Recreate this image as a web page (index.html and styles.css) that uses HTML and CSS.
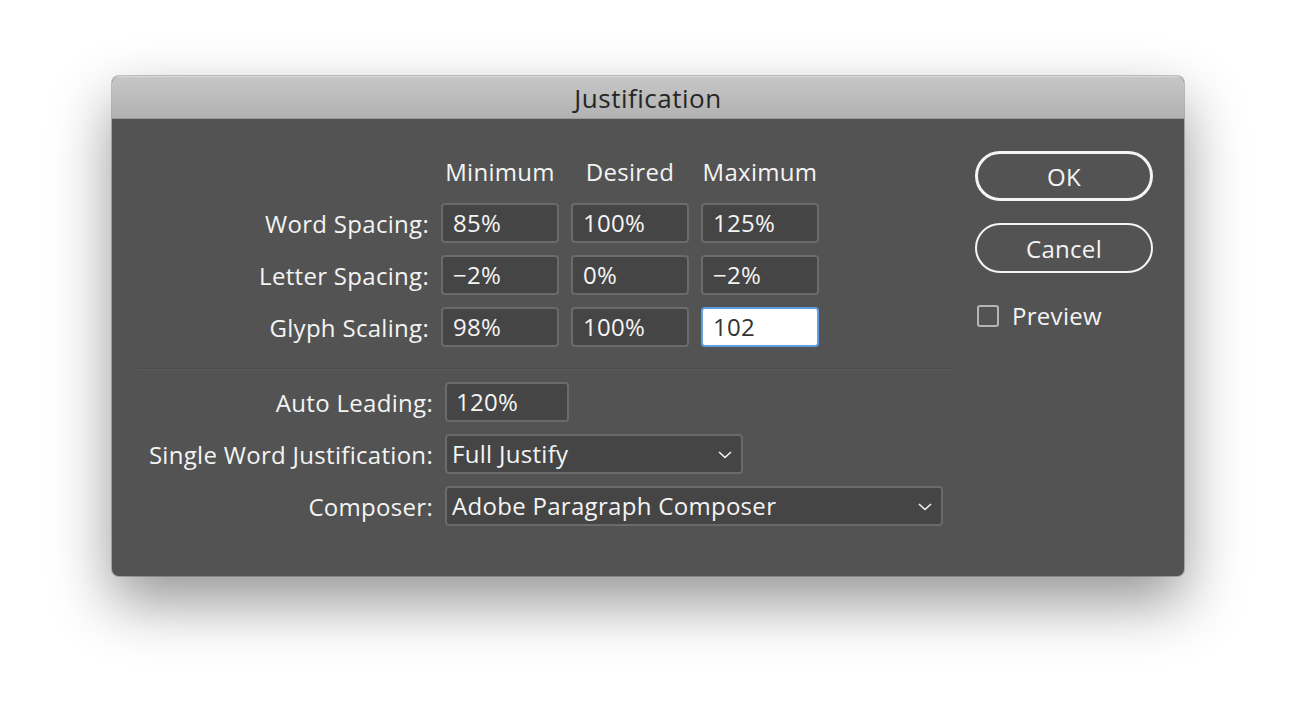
FILE: index.html
```html
<!DOCTYPE html>
<html lang="en">
<head>
  <meta charset="UTF-8">
  <title>Justification</title>
  <link rel="stylesheet" href="styles.css">
</head>
<body>
  <div class="dialog">
    <div class="titlebar">Justification</div>
    <div class="dialog-body">
      <div class="main">
        <!-- spacing table -->
        <div class="spacing-grid">
          <span></span>
          <span class="col-head">Minimum</span>
          <span class="col-head">Desired</span>
          <span class="col-head">Maximum</span>

          <label class="row-label">Word Spacing:</label>
          <div class="field">85%</div>
          <div class="field">100%</div>
          <div class="field">125%</div>

          <label class="row-label">Letter Spacing:</label>
          <div class="field">&minus;2%</div>
          <div class="field">0%</div>
          <div class="field">&minus;2%</div>

          <label class="row-label">Glyph Scaling:</label>
          <div class="field">98%</div>
          <div class="field">100%</div>
          <div class="field active">102</div>
        </div>

        <div class="separator"></div>

        <div class="options-grid">
          <label class="row-label">Auto Leading:</label>
          <div class="field leading">120%</div>

          <label class="row-label">Single Word Justification:</label>
          <div class="field select short">
            <span>Full Justify</span>
            <svg width="14" height="8" viewBox="0 0 14 8"><path d="M1 1l6 5.5L13 1" fill="none" stroke="#f2f2f2" stroke-width="1.6"/></svg>
          </div>

          <label class="row-label">Composer:</label>
          <div class="field select long">
            <span>Adobe Paragraph Composer</span>
            <svg width="14" height="8" viewBox="0 0 14 8"><path d="M1 1l6 5.5L13 1" fill="none" stroke="#f2f2f2" stroke-width="1.6"/></svg>
          </div>
        </div>
      </div>

      <div class="side">
        <button class="btn btn-default">OK</button>
        <button class="btn">Cancel</button>
        <label class="check">
          <span class="box"></span>
          Preview
        </label>
      </div>
    </div>
  </div>
</body>
</html>
```

FILE: styles.css
```css
html, body {
  height: 100%;
}
body {
  margin: 0;
  padding: 76px 0 0;
  box-sizing: border-box;
  background: #fff;
  font-family: 'Open Sans', 'Liberation Sans', sans-serif;
  font-size: 24px;
  font-weight: 500;
  letter-spacing: 0.3px;
  color: #f4f4f4;
}
.dialog {
  width: 1072px;
  margin: 0 auto;
  border-radius: 7px;
  overflow: hidden;
  background: #535353;
  box-shadow: 0 26px 60px rgba(0, 0, 0, 0.42), 0 0 0 1px rgba(0, 0, 0, 0.22);
}
.titlebar {
  height: 42px;
  line-height: 44px;
  text-align: center;
  font-size: 26px;
  font-weight: 400;
  letter-spacing: 0.5px;
  color: #262626;
  background: linear-gradient(#c7c7c7, #b2b2b2);
  border-bottom: 1px solid #999;
  box-shadow: inset 0 1px 0 #d8d8d8;
}
.dialog-body {
  display: flex;
  gap: 20px;
  padding: 0 31px 0 26px;
  height: 457px;
}
.main {
  width: 817px;
  padding-top: 41px;
}
.spacing-grid {
  display: grid;
  grid-template-columns: 291px 118px 118px 118px;
  column-gap: 12px;
  row-gap: 12px;
  align-items: center;
}
.col-head {
  text-align: center;
  line-height: 24px;
  align-self: start;
  height: 31px;
}
.row-label {
  text-align: right;
  white-space: nowrap;
}
.field {
  box-sizing: border-box;
  height: 40px;
  line-height: 36px;
  padding: 0 10px;
  background: #454545;
  border: 2px solid #6b6b6b;
  border-radius: 4px;
  color: #f4f4f4;
  white-space: nowrap;
}
.field.active {
  background: #fff;
  color: #333;
  font-weight: 400;
  border-color: #5f9de2;
}
.separator {
  margin: 21px 0 12px 0;
  height: 0;
  border-top: 1px solid #4b4b4b;
  border-bottom: 1px solid #595959;
}
.options-grid {
  display: grid;
  grid-template-columns: 295px auto;
  column-gap: 12px;
  row-gap: 12px;
  align-items: center;
  justify-items: start;
}
.options-grid .row-label {
  justify-self: end;
}
.leading {
  width: 124px;
  padding-left: 9px;
}
.select {
  display: flex;
  align-items: center;
  justify-content: space-between;
  padding: 0 9px 0 5px;
}
.select svg {
  margin-top: 1px;
}
.short {
  width: 298px;
}
.long {
  width: 498px;
}
.side {
  width: 178px;
  padding-top: 32px;
  display: flex;
  flex-direction: column;
  gap: 22px;
}
.btn {
  box-sizing: border-box;
  height: 50px;
  width: 178px;
  border: 2px solid #f4f4f4;
  border-radius: 25px;
  background: transparent;
  color: #f4f4f4;
  font-family: inherit;
  font-size: 24px;
  font-weight: 500;
  letter-spacing: 0.3px;
  padding: 0;
}
.btn-default {
  border-width: 3px;
}
.check {
  display: flex;
  align-items: center;
  gap: 13px;
  margin-top: 4px;
  padding-left: 2px;
}
.box {
  box-sizing: border-box;
  width: 22px;
  height: 22px;
  border: 2px solid #b5b5b5;
  border-radius: 3px;
}
```
